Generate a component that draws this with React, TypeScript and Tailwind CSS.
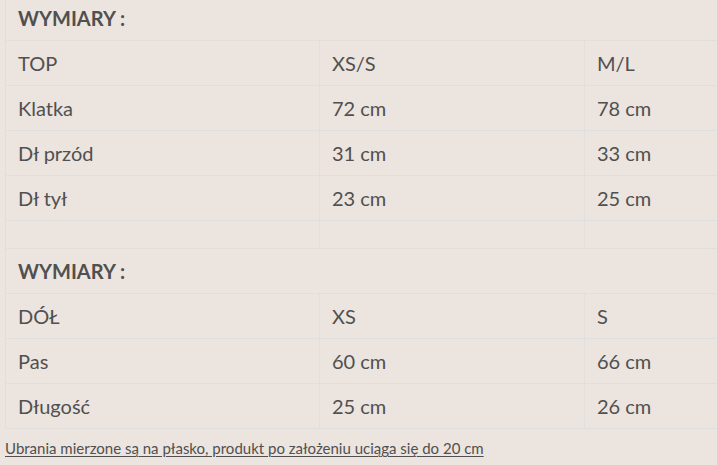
const TOP_ROWS = [
  ["TOP", "XS/S", "M/L"],
  ["Klatka", "72 cm", "78 cm"],
  ["Dł przód", "31 cm", "33 cm"],
  ["Dł tył", "23 cm", "25 cm"],
]

const BOTTOM_ROWS = [
  ["DÓŁ", "XS", "S"],
  ["Pas", "60 cm", "66 cm"],
  ["Długość", "25 cm", "26 cm"],
]

function HeaderRow() {
  return (
    <tr className="h-[45px]">
      <td
        colSpan={3}
        className="border border-[#e1dfdd] pl-[12px] align-middle text-[20px] font-bold text-[#505050]"
      >
        WYMIARY :
      </td>
    </tr>
  )
}

function DataRow({ cells }: { cells: string[] }) {
  return (
    <tr className="h-[45px]">
      {cells.map((c, i) => (
        <td
          key={i}
          className="border border-[#e1dfdd] pl-[12px] align-middle text-[20px] text-[#505050]"
        >
          {c}
        </td>
      ))}
    </tr>
  )
}

export default function App() {
  return (
    <div
      className="h-[465px] w-[717px] overflow-hidden bg-[#ece4de]"
      style={{ fontFamily: "Lato, 'Liberation Sans', sans-serif" }}
    >
      <table className="-mt-[5px] ml-[5px] w-[760px] table-fixed border-collapse">
        <colgroup>
          <col className="w-[314px]" />
          <col className="w-[265px]" />
          <col />
        </colgroup>
        <tbody>
          <HeaderRow />
          {TOP_ROWS.map((r) => (
            <DataRow key={r[0]} cells={r} />
          ))}
          <tr className="h-[28px]">
            <td className="border border-[#e1dfdd]" />
            <td className="border border-[#e1dfdd]" />
            <td className="border border-[#e1dfdd]" />
          </tr>
          <HeaderRow />
          {BOTTOM_ROWS.map((r) => (
            <DataRow key={r[0]} cells={r} />
          ))}
        </tbody>
      </table>
      <p className="mt-[10px] ml-[5px] text-[15px] leading-[18px] text-[#505050] underline decoration-1 underline-offset-2">
        Ubrania mierzone są na płasko, produkt po założeniu uciąga się do 20 cm
      </p>
    </div>
  )
}
